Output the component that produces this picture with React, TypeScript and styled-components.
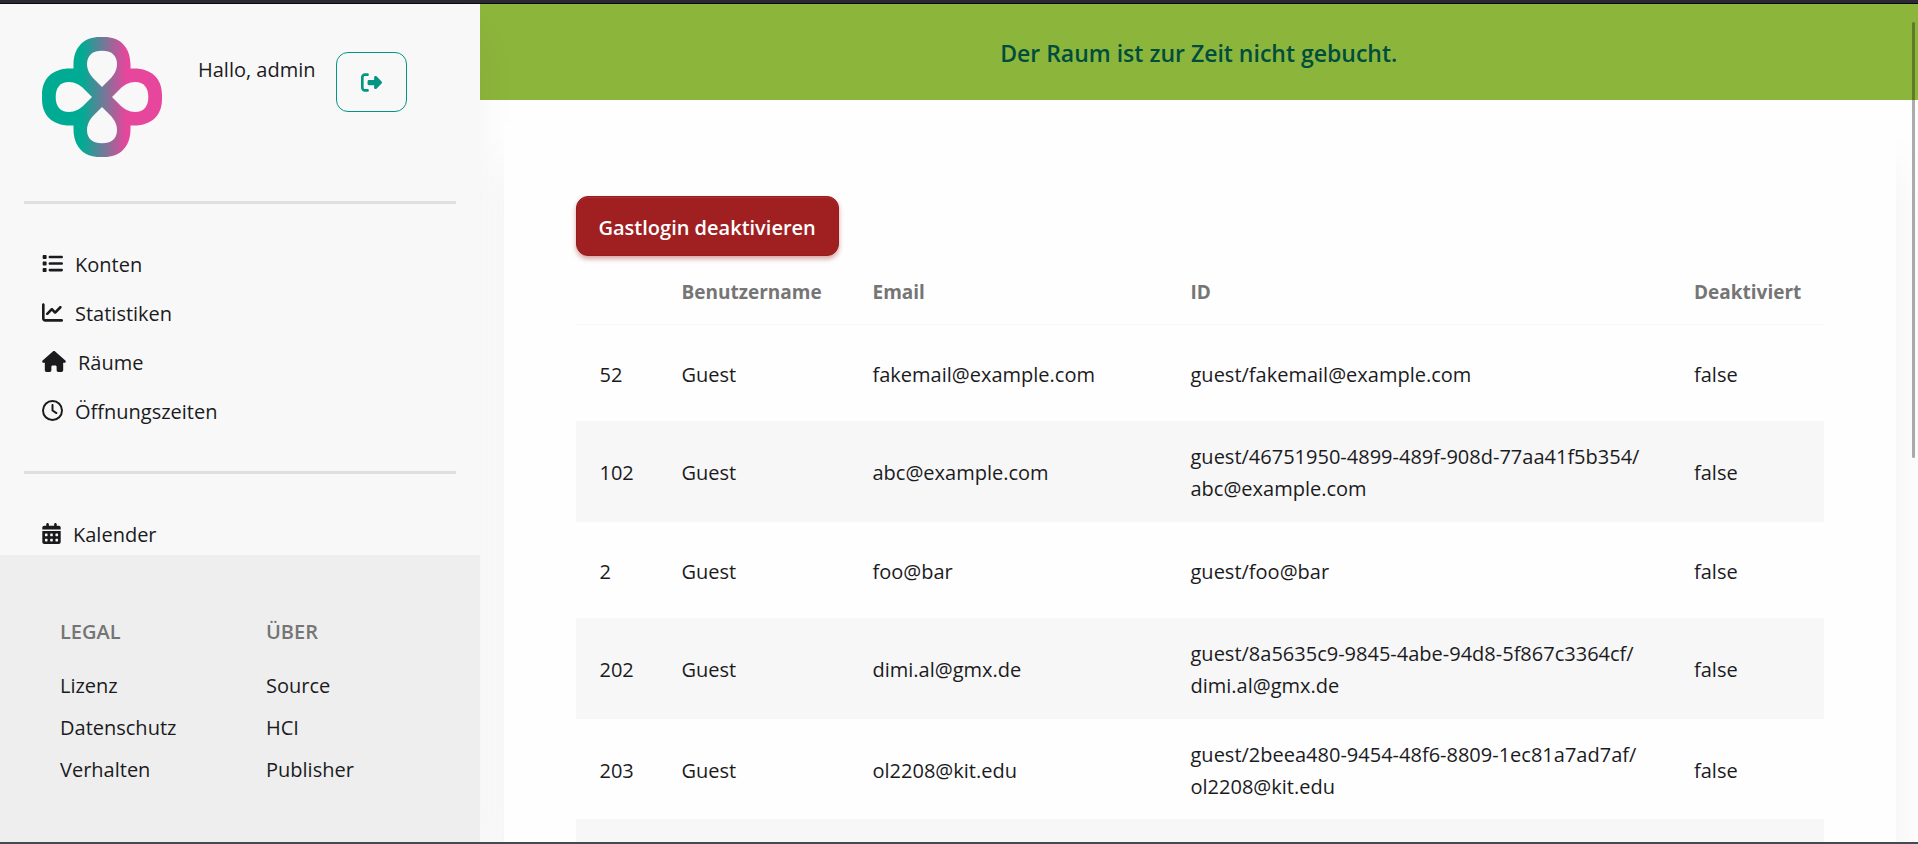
import React from "react";
import styled, { createGlobalStyle } from "styled-components";
import {
  FaCalendarDays,
  FaChartLine,
  FaHouse,
  FaList,
  FaRegClock,
  FaRightFromBracket,
} from "react-icons/fa6";
import type { IconType } from "react-icons";

const GlobalStyle = createGlobalStyle`
  *, *::before, *::after { box-sizing: border-box; }
  body {
    margin: 0;
    background: #fefefe;
    color: #1b1b1e;
    font-family: "Open Sans", "Noto Sans", sans-serif;
    font-size: 20px;
    line-height: 32px;
  }
  a { color: inherit; text-decoration: none; }
  ul { list-style: none; margin: 0; padding: 0; }
`;

const Window = styled.div`
  position: relative;
  display: grid;
  grid-template-columns: 25% minmax(0, 1fr);
  grid-template-rows: minmax(0, 1fr);
  height: 100vh;
  overflow: hidden;
  padding-top: 1px;
  border-top: 3px solid #2b2933;
  border-bottom: 2px solid #444a50;
  background: #0b0b0e;
`;

const Sidebar = styled.aside`
  position: relative;
  z-index: 1;
  display: flex;
  flex-direction: column;
  background: #f8f8f8;
  box-shadow: 0 24px 48px -8px rgba(0, 0, 0, 0.06);
  min-height: 0;
`;

const SidebarBody = styled.div`
  flex: 1 1 0;
  min-height: 0;
  overflow: hidden;
  padding: 0 24px;
`;

const Profile = styled.header`
  display: flex;
  align-items: flex-start;
  padding: 33px 18px 44px;
`;

const Logo = styled.svg`
  width: 120px;
  height: 120px;
  flex: none;
`;

const Greeting = styled.span`
  margin: 17px 20px 0 36px;
`;

const LogoutButton = styled.button`
  display: grid;
  place-items: center;
  width: 71px;
  height: 60px;
  margin-top: 15px;
  border: 1px solid #009682;
  border-radius: 12px;
  background: transparent;
  color: #009682;
  font-size: 21px;
`;

const Divider = styled.hr`
  height: 3px;
  margin: 0;
  border: 0;
  background: #dfdfdf;
`;

const NavList = styled.ul`
  padding: 36px 18px 35px;
`;

const NavLink = styled.a<{ $iconWidth: number }>`
  display: flex;
  align-items: center;
  gap: 12px;
  height: 49px;

  svg {
    flex: none;
    width: ${({ $iconWidth }) => $iconWidth}px;
    height: 21px;
    margin-bottom: 3px;
  }
`;

const Footer = styled.footer`
  display: grid;
  grid-template-columns: 206px 1fr;
  padding: 61px 60px 51px;
  background: #eeeeee;
`;

const FooterTitle = styled.h2`
  margin: 0 0 17px;
  color: #757575;
  font-size: 20px;
  font-weight: 600;
`;

const FooterLink = styled.a`
  display: block;
  line-height: 42px;
`;

const Main = styled.main`
  display: flex;
  flex-direction: column;
  min-width: 0;
  min-height: 0;
  overflow: hidden;
  background: #fefefe;
`;

const Banner = styled.div`
  flex: none;
  padding: 33px 32px 31px;
  background: #8cb53c;
  color: #004d3d;
  font-size: 23px;
  font-weight: 600;
  text-align: center;
`;

const Card = styled.section`
  position: relative;
  z-index: 2;
  flex: none;
  margin: 24px 22px 24px 24px;
  padding: 72px;
  background: #fefefe;
  box-shadow: 0 40px 48px rgba(0, 0, 0, 0.05);
`;

const DangerButton = styled.button`
  display: block;
  height: 60px;
  padding: 3px 22px 0;
  border: 1px solid #951d1f;
  border-radius: 12px;
  background: #a02022;
  box-shadow: 0 3px 5px rgba(160, 32, 34, 0.4), inset 0 1px 0 rgba(255, 255, 255, 0.08);
  color: #fff;
  font: inherit;
  font-weight: 600;
`;

const Table = styled.table`
  width: 100%;
  table-layout: fixed;
  border-collapse: separate;
  border-spacing: 0;
  text-align: left;
`;

const Column = styled.col<{ $width?: number }>`
  width: ${({ $width }) => ($width ? `${$width}px` : "auto")};
`;

const HeadCell = styled.th`
  padding: 20px 24px 16px;
  border-bottom: 1px solid #f7f7f7;
  color: #757575;
  font-size: 19px;
  font-weight: 700;
`;

const Cell = styled.td`
  padding: 20px 24px 16px;
  vertical-align: middle;
`;

const Row = styled.tr`
  height: 96px;

  &:nth-child(even) ${Cell} {
    border-bottom: 1px solid #f7f7f7;
    background: #f7f7f7;
  }
`;

const ScrollThumb = styled.div`
  position: absolute;
  top: 19px;
  right: 3px;
  z-index: 3;
  width: 3px;
  height: 52%;
  border-radius: 2px;
  background: rgba(0, 0, 0, 0.32);
`;

type NavItem = { label: string; icon: IconType; iconWidth: number };

const adminNav: NavItem[] = [
  { label: "Konten", icon: FaList, iconWidth: 21 },
  { label: "Statistiken", icon: FaChartLine, iconWidth: 21 },
  { label: "Räume", icon: FaHouse, iconWidth: 24 },
  { label: "Öffnungszeiten", icon: FaRegClock, iconWidth: 21 },
];

const generalNav: NavItem[] = [
  { label: "Kalender", icon: FaCalendarDays, iconWidth: 19 },
];

const footerGroups = [
  { title: "LEGAL", links: ["Lizenz", "Datenschutz", "Verhalten"] },
  { title: "ÜBER", links: ["Source", "HCI", "Publisher"] },
];

type User = { nr: number; email: string; key?: string };

const users: User[] = [
  { nr: 52, email: "fakemail@example.com" },
  { nr: 102, email: "abc@example.com", key: "46751950-4899-489f-908d-77aa41f5b354" },
  { nr: 2, email: "foo@bar" },
  { nr: 202, email: "dimi.al@gmx.de", key: "8a5635c9-9845-4abe-94d8-5f867c3364cf" },
  { nr: 203, email: "ol2208@kit.edu", key: "2beea480-9454-48f6-8809-1ec81a7ad7af" },
];

const petal =
  "M60 50 L52 42 C48 38 45 33 45 27 C45 18 51 13.7 60 13.7 C69 13.7 75 18 75 27 C75 33 72 38 68 42 Z";

function CloverLogo() {
  return (
    <Logo viewBox="0 0 120 120" role="img" aria-label="Logo">
      <defs>
        <linearGradient id="clover" gradientUnits="userSpaceOnUse" x1="40" y1="0" x2="84" y2="0">
          <stop offset="0" stopColor="#00ab94" />
          <stop offset="1" stopColor="#e6469b" />
        </linearGradient>
      </defs>
      <path
        fill="url(#clover)"
        d="M31.5 31.5 V28 C31.5 10 42 0 58 0 H62 C78 0 88.5 10 88.5 28 V31.5 H92 C110 31.5 120 42 120 58 V62 C120 78 110 88.5 92 88.5 H88.5 V92 C88.5 110 78 120 62 120 H58 C42 120 31.5 110 31.5 92 V88.5 H28 C10 88.5 0 78 0 62 V58 C0 42 10 31.5 28 31.5 Z"
      />
      {[0, 90, 180, 270].map((angle) => (
        <path key={angle} d={petal} fill="#f8f8f8" transform={`rotate(${angle} 60 60)`} />
      ))}
    </Logo>
  );
}

function Nav({ items }: { items: NavItem[] }) {
  return (
    <NavList>
      {items.map(({ label, icon: Icon, iconWidth }) => (
        <li key={label}>
          <NavLink href="#" $iconWidth={iconWidth}>
            <Icon aria-hidden />
            {label}
          </NavLink>
        </li>
      ))}
    </NavList>
  );
}

function UserRow({ user }: { user: User }) {
  return (
    <Row>
      <Cell>{user.nr}</Cell>
      <Cell>Guest</Cell>
      <Cell>{user.email}</Cell>
      <Cell>
        guest/
        {user.key && (
          <>
            {user.key}/<br />
          </>
        )}
        {user.email}
      </Cell>
      <Cell>false</Cell>
    </Row>
  );
}

export default function App() {
  return (
    <>
      <GlobalStyle />
      <Window>
        <Sidebar>
          <SidebarBody>
            <Profile>
              <CloverLogo />
              <Greeting>Hallo, admin</Greeting>
              <LogoutButton type="button" aria-label="Abmelden">
                <FaRightFromBracket aria-hidden />
              </LogoutButton>
            </Profile>
            <Divider />
            <nav>
              <Nav items={adminNav} />
              <Divider />
              <Nav items={generalNav} />
            </nav>
          </SidebarBody>
          <Footer>
            {footerGroups.map(({ title, links }) => (
              <section key={title}>
                <FooterTitle>{title}</FooterTitle>
                {links.map((link) => (
                  <FooterLink key={link} href="#">
                    {link}
                  </FooterLink>
                ))}
              </section>
            ))}
          </Footer>
        </Sidebar>
        <Main>
          <Banner role="status">Der Raum ist zur Zeit nicht gebucht.</Banner>
          <Card>
            <DangerButton type="button">Gastlogin deaktivieren</DangerButton>
            <Table>
              <colgroup>
                <Column $width={82} />
                <Column $width={191} />
                <Column $width={318} />
                <Column />
                <Column $width={154} />
              </colgroup>
              <thead>
                <tr>
                  <HeadCell />
                  <HeadCell>Benutzername</HeadCell>
                  <HeadCell>Email</HeadCell>
                  <HeadCell>ID</HeadCell>
                  <HeadCell>Deaktiviert</HeadCell>
                </tr>
              </thead>
              <tbody>
                {users.map((user) => (
                  <UserRow key={user.nr} user={user} />
                ))}
                <Row aria-hidden>
                  <Cell colSpan={5} />
                </Row>
              </tbody>
            </Table>
          </Card>
        </Main>
        <ScrollThumb />
      </Window>
    </>
  );
}
